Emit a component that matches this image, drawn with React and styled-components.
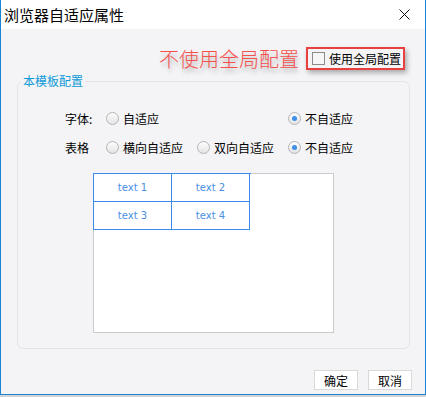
import styled, { createGlobalStyle } from "styled-components";

const GlobalStyle = createGlobalStyle`
  html, body {
    margin: 0;
    padding: 0;
    background: #d3d4d6;
  }
  body {
    font-family: "Noto Sans CJK SC", "Noto Sans", sans-serif;
    color: #000;
  }
`;

const Window = styled.div`
  width: 426px;
  height: 395px;
  box-sizing: border-box;
  border: 1px solid #1883d7;
  border-top: none;
  background: #f4f4f6;
  display: flex;
  flex-direction: column;
`;

const TitleBar = styled.div`
  height: 29px;
  flex: none;
  background: #fff;
  display: flex;
  align-items: center;
  justify-content: space-between;
  padding: 0 15px 0 3px;
  font-size: 15px;
  line-height: 29px;
`;

const CloseIcon = () => (
  <svg width="11" height="11" viewBox="0 0 11 11">
    <path d="M0.5 0.5 L10.5 10.5 M10.5 0.5 L0.5 10.5" stroke="#111" strokeWidth="1" />
  </svg>
);

const TopRow = styled.div`
  display: flex;
  justify-content: flex-end;
  align-items: center;
  gap: 7px;
  margin-top: 18px;
  padding-right: 20px;
`;

const Note = styled.span`
  font-size: 20px;
  font-weight: 300;
  line-height: 23px;
  color: #f4504c;
  text-shadow: 1px 4px 4px rgba(0, 0, 0, 0.28);
`;

const GlobalBox = styled.label`
  display: flex;
  align-items: center;
  gap: 4px;
  height: 23px;
  box-sizing: border-box;
  padding: 0 2px 0 4px;
  border: 2px solid #e8403f;
  box-shadow: 2px 3px 5px rgba(0, 0, 0, 0.3);
  font-size: 12px;
`;

const Check = styled.span`
  width: 13px;
  height: 13px;
  box-sizing: border-box;
  border: 1px solid #8b8b8b;
  background: #f6f6f6;
`;

const Group = styled.fieldset`
  margin: 3px 15px 0 16px;
  padding: 0 0 15px;
  border: 1px solid #e3e3e8;
  border-radius: 6px;
  min-width: 0;
`;

const Legend = styled.legend`
  margin-left: 3px;
  padding: 0 2px;
  font-size: 12px;
  line-height: 16px;
  color: #0f9ad8;
`;

const Options = styled.div`
  display: grid;
  grid-template-columns: 41px 91px 91px auto;
  grid-auto-rows: 29px;
  align-items: center;
  margin-top: 15px;
  padding-left: 47px;
  font-size: 12px;
`;

const RowLabel = styled.span`
  grid-column: 1;
`;

const Option = styled.label`
  grid-column: ${(p) => p.col};
  display: flex;
  align-items: center;
  gap: 4px;
  white-space: nowrap;
`;

const Radio = styled.span`
  width: 13px;
  height: 13px;
  box-sizing: border-box;
  border-radius: 50%;
  border: 1px solid #b4b4b4;
  background: linear-gradient(#fdfdfd, #e4e4e4);
  display: flex;
  align-items: center;
  justify-content: center;
  &::after {
    content: "";
    width: 5px;
    height: 5px;
    border-radius: 50%;
    background: ${(p) => (p.checked ? "#3f8fe9" : "transparent")};
  }
`;

const Preview = styled.div`
  width: 241px;
  height: 160px;
  box-sizing: border-box;
  margin: 11px 0 0 75px;
  background: #fff;
  border: 1px solid #cbcbcb;
`;

const Table = styled.div`
  display: grid;
  grid-template-columns: 78px 78px;
  grid-auto-rows: 28px;
  width: 157px;
  margin: -1px 0 0 -1px;
  border-top: 1px solid #3c8be9;
  border-left: 1px solid #3c8be9;
`;

const Cell = styled.div`
  border-right: 1px solid #3c8be9;
  border-bottom: 1px solid #3c8be9;
  display: flex;
  align-items: center;
  justify-content: center;
  font-family: "DejaVu Sans", sans-serif;
  font-size: 10px;
  color: #4a8fe4;
`;

const Footer = styled.div`
  margin-top: auto;
  display: flex;
  justify-content: flex-end;
  gap: 10px;
  padding: 0 13px 4px;
`;

const Button = styled.button`
  width: 44px;
  height: 20px;
  padding: 0;
  background: #fff;
  border: 1px solid #d9d9d9;
  font-family: inherit;
  font-size: 12px;
  color: #000;
`;

export default function App() {
  return (
    <>
      <GlobalStyle />
      <Window>
        <TitleBar>
          <span>浏览器自适应属性</span>
          <CloseIcon />
        </TitleBar>
        <TopRow>
          <Note>不使用全局配置</Note>
          <GlobalBox>
            <Check />
            使用全局配置
          </GlobalBox>
        </TopRow>
        <Group>
          <Legend>本模板配置</Legend>
          <Options>
            <RowLabel>字体:</RowLabel>
            <Option col={2}>
              <Radio />
              自适应
            </Option>
            <Option col={4}>
              <Radio checked />
              不自适应
            </Option>
            <RowLabel>表格</RowLabel>
            <Option col={2}>
              <Radio />
              横向自适应
            </Option>
            <Option col={3}>
              <Radio />
              双向自适应
            </Option>
            <Option col={4}>
              <Radio checked />
              不自适应
            </Option>
          </Options>
          <Preview>
            <Table>
              <Cell>text 1</Cell>
              <Cell>text 2</Cell>
              <Cell>text 3</Cell>
              <Cell>text 4</Cell>
            </Table>
          </Preview>
        </Group>
        <Footer>
          <Button>确定</Button>
          <Button>取消</Button>
        </Footer>
      </Window>
    </>
  );
}
